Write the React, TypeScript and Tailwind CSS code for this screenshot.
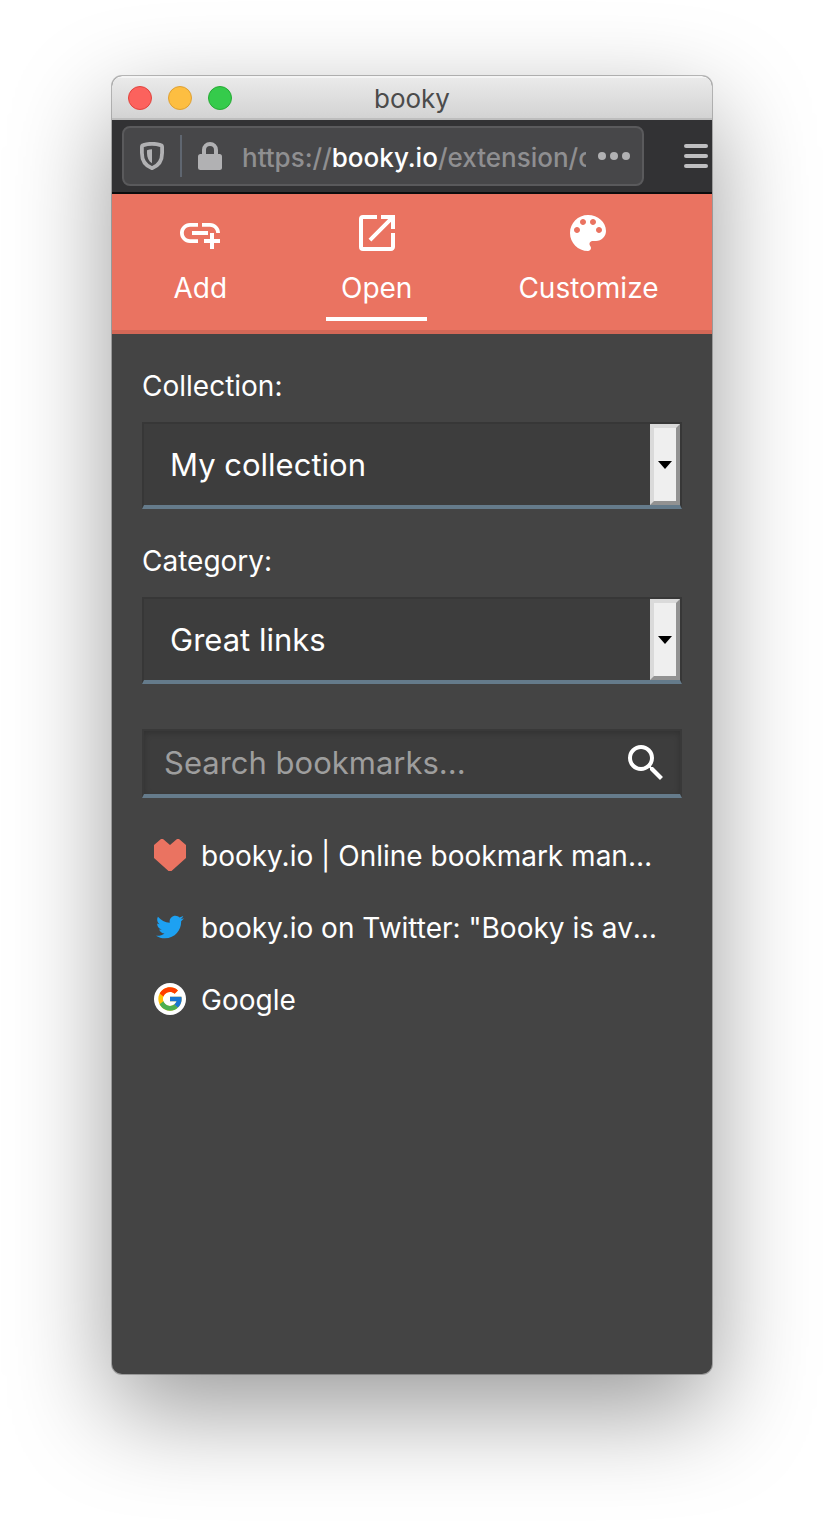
import type { ReactNode } from "react";
import { useState } from "react";
import { MdOpenInNew, MdSearch } from "react-icons/md";
import { FaTwitter } from "react-icons/fa";
import { FcGoogle } from "react-icons/fc";

function AddLinkIcon() {
  return (
    <svg viewBox="0 0 24 24" className="size-12" fill="currentColor" aria-hidden="true">
      <path d="M8 11h8v2H8v-2zm12.1 1H22c0-2.76-2.24-5-5-5h-4v1.9h4c1.71 0 3.1 1.39 3.1 3.1zM3.9 12c0-1.71 1.39-3.1 3.1-3.1h4V7H7c-2.76 0-5 2.24-5 5s2.24 5 5 5h4v-1.9H7c-1.71 0-3.1-1.39-3.1-3.1zM19 12h-2v3h-3v2h3v3h2v-3h3v-2h-3v-3z" />
    </svg>
  );
}

function PaletteIcon() {
  return (
    <svg viewBox="0 0 24 24" className="size-12" fill="currentColor" aria-hidden="true">
      <path d="M12 3c-4.97 0-9 4.03-9 9s4.03 9 9 9c.83 0 1.5-.67 1.5-1.5 0-.39-.15-.74-.39-1.01-.23-.26-.38-.61-.38-.99 0-.83.67-1.5 1.5-1.5H16c2.76 0 5-2.24 5-5 0-4.42-4.03-8-9-8zm-5.5 9c-.83 0-1.5-.67-1.5-1.5S5.67 9 6.5 9 8 9.67 8 10.5 7.33 12 6.5 12zm3-4C8.67 8 8 7.33 8 6.5S8.67 5 9.5 5s1.5.67 1.5 1.5S10.33 8 9.5 8zm5 0c-.83 0-1.5-.67-1.5-1.5S13.67 5 14.5 5s1.5.67 1.5 1.5S15.33 8 14.5 8zm3 4c-.83 0-1.5-.67-1.5-1.5S16.67 9 17.5 9s1.5.67 1.5 1.5-.67 1.5-1.5 1.5z" />
    </svg>
  );
}

function ShieldIcon() {
  return (
    <svg viewBox="0 0 24 28" className="h-7 w-6 shrink-0" aria-hidden="true">
      <path
        d="M12 1.8C9 1.8 5.500 2.400 3.400 3.100C2.400 3.400 1.900 4.100 1.900 5V11C1.900 18.500 5.500 23.800 12 26.200C18.500 23.800 22.100 18.500 22.100 11V5C22.100 4.100 21.600 3.400 20.600 3.100C18.500 2.400 15 1.800 12 1.800Z"
        fill="none"
        stroke="#b1b1b3"
        strokeWidth="3.800"
      />
      <path d="M12 7.200V21.300C8.500 19.200 7 15.500 7 11V8.200C8.600 7.600 10.300 7.300 12 7.200Z" fill="#b1b1b3" />
    </svg>
  );
}

function LockIcon() {
  return (
    <svg viewBox="0 0 24 28" className="h-7 w-6 shrink-0" aria-hidden="true">
      <path d="M6 13V8a6 6 0 0 1 12 0v5" fill="none" stroke="#b1b1b3" strokeWidth="4" />
      <rect y="12" width="24" height="16" rx="2.500" fill="#b1b1b3" />
    </svg>
  );
}

function HeartIcon() {
  return (
    <svg viewBox="0 0 32 32" className="size-8" aria-hidden="true">
      <path d="M0 6L7 0H9L16 6L23 0H25L32 6V19L17.500 32H14.500L0 19Z" fill="#ea7361" />
    </svg>
  );
}

function Tab({ icon, label, active, onSelect }: { icon: ReactNode; label: string; active: boolean; onSelect: () => void }) {
  return (
    <button type="button" aria-pressed={active} onClick={onSelect} className="flex flex-col items-center pt-[15px] pb-[9px]">
      {icon}
      <span
        className={
          active
            ? "mt-2 border-b-4 border-white px-[15px] pt-[5px] pb-[10px] leading-[37px]"
            : "mt-2 border-b-4 border-transparent px-[15px] pt-[5px] pb-[10px] leading-[37px]"
        }
      >
        {label}
      </span>
    </button>
  );
}

function SelectField({ id, label, options }: { id: string; label: string; options: string[] }) {
  return (
    <div className="mb-[30px]">
      <label htmlFor={id} className="mb-[14px] block leading-[44px]">
        {label}
      </label>
      <div className="relative">
        <select
          id={id}
          className="block h-[87px] w-full appearance-none border-2 border-b-4 border-[#373737] border-b-[#657b8b] bg-[#3d3d3d] pt-[2px] pr-10 pl-[26px] text-[31px] text-white outline-none"
        >
          {options.map((o) => (
            <option key={o}>{o}</option>
          ))}
        </select>
        <span className="pointer-events-none absolute top-[2px] right-[2px] bottom-1 flex w-[30px] items-center justify-center border-4 border-t-[#dadada] border-r-[#929292] border-b-[#929292] border-l-[#dadada] bg-[#efefef]">
          <svg viewBox="0 0 14 8" className="h-2 w-[14px] shrink-0" aria-hidden="true">
            <path d="M0 0H14L7 8Z" fill="#000" />
          </svg>
        </span>
      </div>
    </div>
  );
}

const bookmarks = [
  { title: "booky.io | Online bookmark manager", icon: <HeartIcon /> },
  {
    title: 'booky.io on Twitter: "Booky is available as an extension"',
    icon: <FaTwitter className="size-7 text-[#1da1f2]" aria-hidden="true" />,
  },
  {
    title: "Google",
    icon: (
      <span className="flex size-8 items-center justify-center rounded-full bg-white">
        <FcGoogle className="size-7" aria-hidden="true" />
      </span>
    ),
  },
];

export default function App() {
  const [tab, setTab] = useState("Open");
  return (
    <div className="flex min-h-screen flex-col bg-white px-28 pt-[76px] pb-[148px] font-['Inter',sans-serif]">
      <div className="flex flex-1 flex-col overflow-hidden rounded-[10px] bg-[#444444] shadow-[0_0_0_1px_rgba(0,0,0,0.25),0_36px_100px_rgba(0,0,0,0.4)]">
        <div className="relative flex h-11 items-center justify-center border-t-2 border-b-2 border-t-[#f4f4f4] border-b-[#bdbdbd] bg-linear-to-b from-[#eaeaea] to-[#d3d3d3]">
          <div className="absolute left-4 flex gap-4">
            <button type="button" aria-label="Close" className="size-6 rounded-full border border-[#e0443e] bg-[#fc625d]" />
            <button type="button" aria-label="Minimize" className="size-6 rounded-full border border-[#dea034] bg-[#fdbe41]" />
            <button type="button" aria-label="Zoom" className="size-6 rounded-full border border-[#27aa35] bg-[#35cb4b]" />
          </div>
          <h1 className="text-[26px] text-[#4b4b4b]">booky</h1>
        </div>

        <div className="flex h-[74px] items-center border-b-2 border-[#0c0c0d] bg-[#323234] pr-1 pl-[10px]">
          <div className="flex h-[60px] min-w-0 flex-1 items-center rounded-lg border-2 border-[#5a5a5c] bg-[#474749] pr-3 pl-4">
            <ShieldIcon />
            <span className="mx-4 h-[42px] w-[2px] shrink-0 bg-[#5f6670]" />
            <LockIcon />
            <p className="ml-5 min-w-0 flex-1 overflow-hidden pt-[2px] text-[26px] font-medium whitespace-nowrap text-[#8f8f91]">
              https://<span className="text-white">booky.io</span>/extension/open
            </p>
            <button type="button" aria-label="Page actions" className="ml-3 flex shrink-0 gap-1">
              <span className="size-2 rounded-full bg-[#b1b1b3]" />
              <span className="size-2 rounded-full bg-[#b1b1b3]" />
              <span className="size-2 rounded-full bg-[#b1b1b3]" />
            </button>
          </div>
          <button type="button" aria-label="Menu" className="ml-10 flex w-6 shrink-0 flex-col gap-[6px]">
            <span className="h-1 rounded-full bg-[#bfbfc1]" />
            <span className="h-1 rounded-full bg-[#bfbfc1]" />
            <span className="h-1 rounded-full bg-[#bfbfc1]" />
          </button>
        </div>

        <nav className="grid h-[140px] grid-cols-[1fr_1fr_1.4fr] border-b-4 border-[#d46857] bg-[#ea7361] text-[28px] text-white">
          <Tab icon={<AddLinkIcon />} label="Add" active={tab === "Add"} onSelect={() => setTab("Add")} />
          <Tab icon={<MdOpenInNew className="size-12" />} label="Open" active={tab === "Open"} onSelect={() => setTab("Open")} />
          <Tab icon={<PaletteIcon />} label="Customize" active={tab === "Customize"} onSelect={() => setTab("Customize")} />
        </nav>

        <main className="flex-1 px-[30px] pt-[30px] text-[28px] text-white">
          <SelectField id="collection" label="Collection:" options={["My collection"]} />
          <SelectField id="category" label="Category:" options={["Great links"]} />
          <form className="mt-[45px] flex h-[69px] items-center border-2 border-b-4 border-[#393939] border-b-[#657b8b] bg-[#3d3d3d] pr-[10px] shadow-[inset_0_2px_6px_rgba(0,0,0,0.2)]">
            <input
              type="text"
              aria-label="Search bookmarks"
              placeholder="Search bookmarks..."
              className="min-w-0 flex-1 bg-transparent pt-[2px] pl-5 text-[31px] text-white outline-none placeholder:text-[#9e9e9e]"
            />
            <button type="button" aria-label="Search">
              <MdSearch className="size-12" />
            </button>
          </form>
          <ul className="mt-[21px]">
            {bookmarks.map((b) => (
              <li key={b.title}>
                <a href="#" className="flex h-[72px] items-center pr-5 pl-3">
                  <span className="flex size-8 shrink-0 items-center justify-center">{b.icon}</span>
                  <span className="ml-[15px] truncate pt-[2px]">{b.title}</span>
                </a>
              </li>
            ))}
          </ul>
        </main>
      </div>
    </div>
  );
}
